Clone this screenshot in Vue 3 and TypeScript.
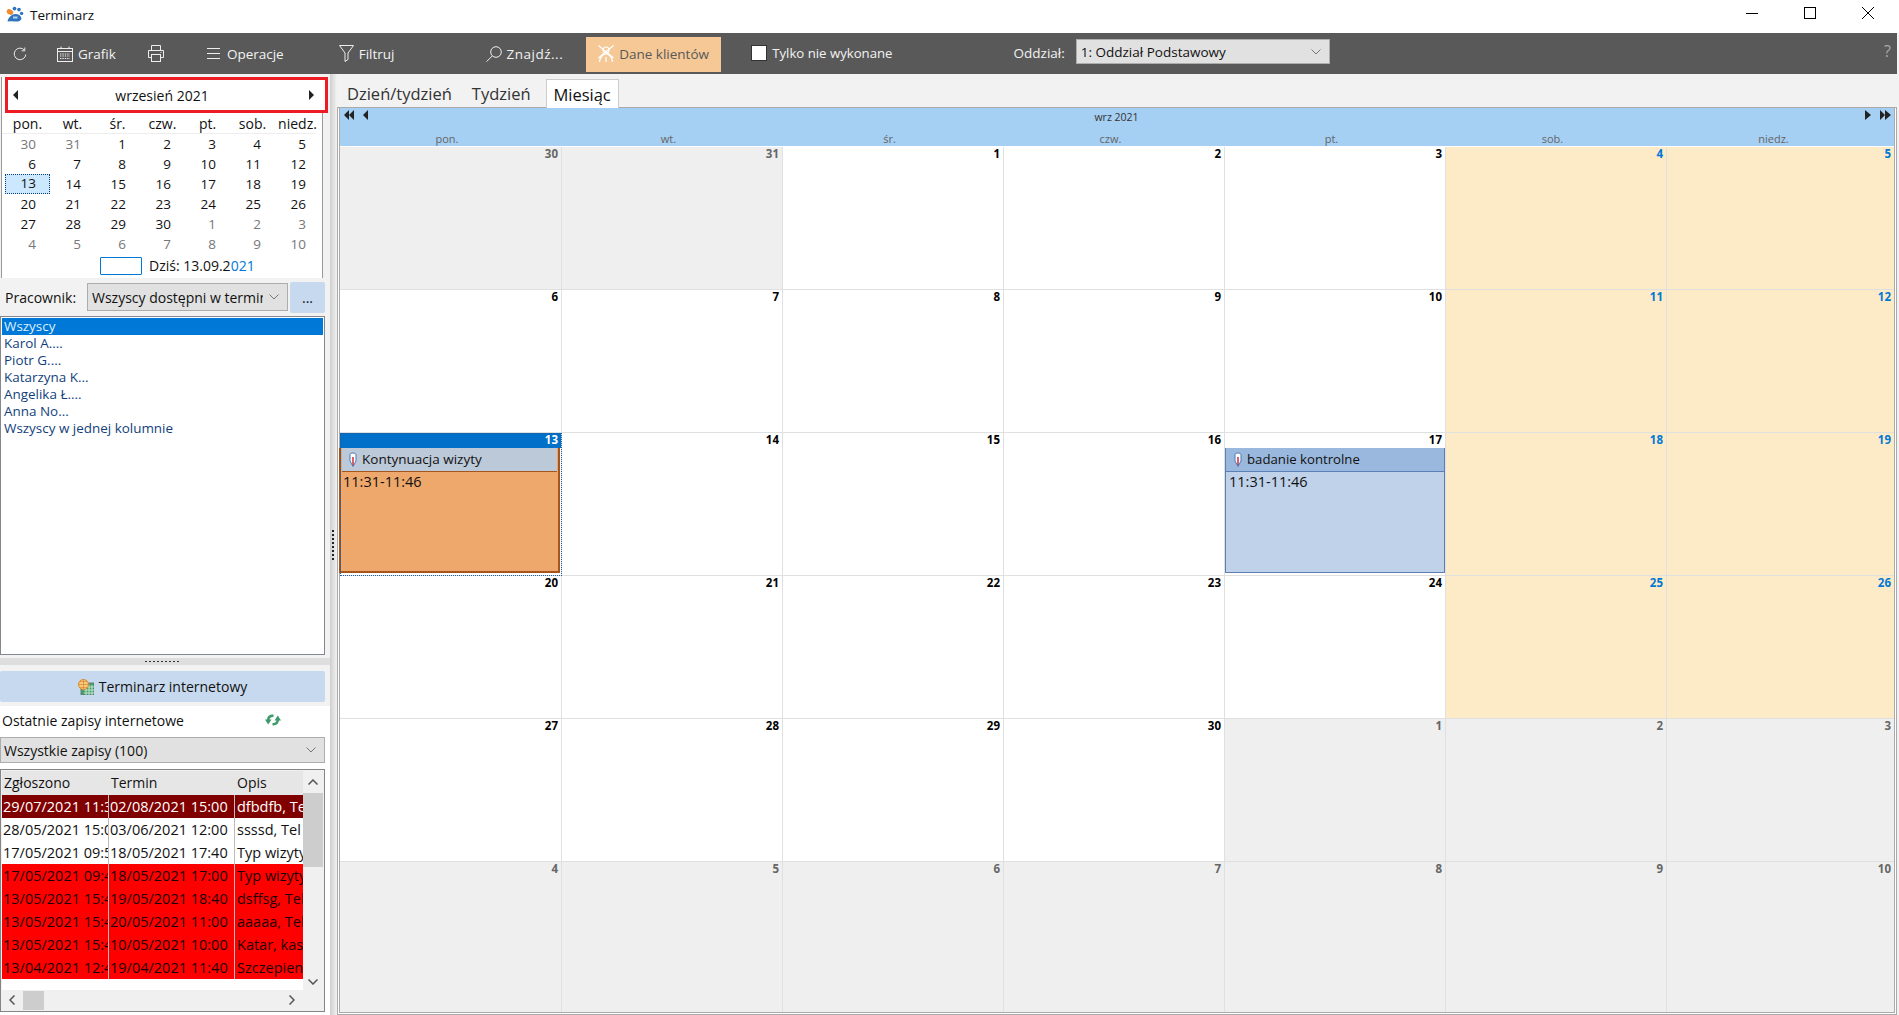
<script setup lang="ts">
interface MiniDay { n: number; muted: boolean; today: boolean }
interface Cell { n: number; kind: 'muted' | 'normal' | 'weekend'; appt: '' | 'sel' | 'blue' }

const weekdays = ['pon.', 'wt.', 'śr.', 'czw.', 'pt.', 'sob.', 'niedz.']
const miniDays: MiniDay[] = []
const cells: Cell[] = []
for (let i = 0; i < 42; i++) {
  const d = i - 1
  const muted = i < 2 || i > 31
  const n = i < 2 ? 30 + i : i > 31 ? i - 31 : d
  miniDays.push({ n, muted, today: i === 14 })
  const col = i % 7
  cells.push({
    n,
    kind: muted ? 'muted' : col > 4 ? 'weekend' : 'normal',
    appt: i === 14 ? 'sel' : i === 18 ? 'blue' : ''
  })
}
const people = ['Wszyscy', 'Karol A....', 'Piotr G....', 'Katarzyna K...', 'Angelika Ł....', 'Anna No...', 'Wszyscy w jednej kolumnie']
const rows = [
  { a: '29/07/2021 11:30', b: '02/08/2021 15:00', c: 'dfbdfb, Tel', t: 'dark' },
  { a: '28/05/2021 15:00', b: '03/06/2021 12:00', c: 'ssssd, Tel', t: 'white' },
  { a: '17/05/2021 09:50', b: '18/05/2021 17:40', c: 'Typ wizyty', t: 'white' },
  { a: '17/05/2021 09:40', b: '18/05/2021 17:00', c: 'Typ wizyty', t: 'red' },
  { a: '13/05/2021 15:40', b: '19/05/2021 18:40', c: 'dsffsg, Tel', t: 'red' },
  { a: '13/05/2021 15:40', b: '20/05/2021 11:00', c: 'aaaaa, Tel', t: 'red' },
  { a: '13/05/2021 15:40', b: '10/05/2021 10:00', c: 'Katar, kasz', t: 'red' },
  { a: '13/04/2021 12:40', b: '19/04/2021 11:40', c: 'Szczepienie', t: 'red' }
]
const dots = Array.from({ length: 8 })
</script>

<template>
  <div class="app">
    <header class="titlebar">
      <svg class="logo" width="18" height="18" viewBox="0 0 18 18">
        <ellipse cx="4" cy="6" rx="3.4" ry="2.6" fill="#f28a2e" transform="rotate(25 4 6)" />
        <circle cx="8.5" cy="2.6" r="1.9" fill="#2f74c0" />
        <circle cx="13" cy="3.6" r="1.8" fill="#2f74c0" />
        <circle cx="15.6" cy="7.4" r="1.7" fill="#2f74c0" />
        <path d="M1.5 15.5 Q3 9 9 8 Q15 8 15.5 13 Q14 16 9 15.5 Q5 15 1.5 15.5Z" fill="#2f74c0" />
        <rect x="7" y="10.5" width="4.5" height="2" fill="#bcd6f0" />
      </svg>
      <span class="title">Terminarz</span>
      <div class="winctl">
        <svg width="12" height="12" viewBox="0 0 12 12"><path d="M0 6.5H12" stroke="#000" /></svg>
        <svg width="12" height="12" viewBox="0 0 12 12"><rect x=".5" y=".5" width="11" height="11" fill="none" stroke="#000" /></svg>
        <svg width="12" height="12" viewBox="0 0 12 12"><path d="M0 0L12 12M12 0L0 12" stroke="#000" /></svg>
      </div>
    </header>

    <nav class="toolbar">
      <svg class="t-refresh" width="14" height="14" viewBox="0 0 14 14" fill="none" stroke="#e8e8e8">
        <path d="M11.5 3.2A5.8 5.8 0 1 0 12.8 7.5" />
        <path d="M11.8 .5V3.8H8.6" />
      </svg>
      <svg class="t-grafik" width="16" height="16" viewBox="0 0 16 16" fill="none" stroke="#eee">
        <rect x=".5" y="2.5" width="15" height="13" />
        <path d="M.5 5.5H15.5M4 .5V3M12 .5V3" />
        <path d="M3 8H13M3 10H13M3 12.5H13" stroke-dasharray="1.4 1" />
      </svg>
      <span class="t-label">Grafik</span>
      <svg class="t-print" width="16" height="17" viewBox="0 0 16 17" fill="none" stroke="#eee">
        <path d="M3.5 5.5V.5H12.500V5.500" />
        <path d="M3.500 12.500H.5V5.500H15.500V12.500H12.500" />
        <rect x="3.500" y="9.500" width="9" height="7" />
        <path d="M12.500 7.500H13.500" />
      </svg>
      <svg class="t-menu" width="13" height="11" viewBox="0 0 13 11" stroke="#eee"><path d="M0 .5H13M0 5.500H13M0 10.500H13" /></svg>
      <span class="t-label t-ml7">Operacje</span>
      <svg class="t-filter" width="15" height="17" viewBox="0 0 15 17" fill="none" stroke="#eee">
        <path d="M.5 .5H14.500L9 8V14.500L6 16.500V8Z" />
      </svg>
      <span class="t-label t-ml5">Filtruj</span>
      <svg class="t-search" width="16" height="16" viewBox="0 0 16 16" fill="none" stroke="#eee">
        <circle cx="10" cy="6" r="5.300" />
        <path d="M6.200 10L.5 15.700" />
      </svg>
      <span class="t-label t-ml5 t-find">Znajdź...</span>
      <div class="t-dane">
        <svg width="18" height="18" viewBox="0 0 18 18" fill="none" stroke="#fff" stroke-width="1.200">
          <circle cx="9" cy="5" r="3" />
          <path d="M1.500 .5L16.500 13M16.500 .5L1.500 13M2.500 17C3 12 6 9 9 9S15 12 15.500 17M9 12V17" />
        </svg>
        <span>Dane klientów</span>
      </div>
      <span class="t-check"></span>
      <span class="t-label t-ml5 t-only">Tylko nie wykonane</span>
      <span class="t-label t-odd">Oddział:</span>
      <div class="combo t-combo">
        <span class="combo-text">1: Oddział Podstawowy</span>
        <svg class="chev" width="10" height="6" viewBox="0 0 10 6" fill="none" stroke="#777"><path d="M.5 .5L5 5L9.500 .5" /></svg>
      </div>
      <span class="t-help">?</span>
    </nav>

    <main class="main">
      <aside class="left">
        <section class="cal">
          <div class="cal-nav">
            <svg width="5" height="10" viewBox="0 0 5 10"><path d="M5 0V10L0 5Z" fill="#222" /></svg>
            <span>wrzesień 2021</span>
            <svg width="5" height="10" viewBox="0 0 5 10"><path d="M0 0V10L5 5Z" fill="#222" /></svg>
          </div>
          <div class="cal-head">
            <span v-for="w in weekdays" :key="w">{{ w }}</span>
          </div>
          <div class="cal-days">
            <span v-for="(d, i) in miniDays" :key="i" class="md" :class="{ muted: d.muted, today: d.today }">{{ d.n }}</span>
          </div>
          <div class="cal-foot">
            <span class="today-box"></span>
            <span class="today-text">Dziś: 13.09.2<span class="blue-part">021</span></span>
          </div>
        </section>

        <div class="worker">
          <span class="worker-label">Pracownik:</span>
          <div class="combo worker-combo">
            <span class="combo-text">Wszyscy dostępni w termin</span>
            <svg class="chev" width="10" height="6" viewBox="0 0 10 6" fill="none" stroke="#777"><path d="M.5 .5L5 5L9.500 .5" /></svg>
          </div>
          <button class="more">...</button>
        </div>

        <ul class="people">
          <li v-for="(p, i) in people" :key="p" :class="{ sel: i === 0 }">{{ p }}</li>
        </ul>

        <div class="hsplit"><i></i></div>

        <button class="inet">
          <svg width="16" height="16" viewBox="0 0 16 16">
            <rect x="3" y="4" width="13" height="12" fill="#4aa36f" stroke="#5a6a70" stroke-width=".8" />
            <path d="M6 8H16M6 11H16M6 14H16M8 6V16M11 6V16M14 6V16" stroke="#d5f0dd" stroke-width=".8" />
            <circle cx="5.500" cy="5.500" r="5" fill="#f6c77d" stroke="#d98a2c" />
            <path d="M.5 5.500H10.500M5.500 .5V10.500M2 2.500H9M2 8.500H9" stroke="#d98a2c" stroke-width=".7" />
          </svg>
          <span>Terminarz internetowy</span>
        </button>

        <div class="lower">
          <div class="last">
            <span>Ostatnie zapisy internetowe</span>
            <svg width="16" height="12" viewBox="0 0 16 12" fill="none">
              <path d="M8.500 1.800Q3.500 1.500 3.200 6" stroke="#3d9a6b" stroke-width="2.600" />
              <path d="M0 5.500H6.500L3.200 10.500Z" fill="#3d9a6b" />
              <path d="M7.500 10.200Q12.500 10.500 12.800 6" stroke="#3d9a6b" stroke-width="2.600" />
              <path d="M16 6.500H9.500L12.800 1.500Z" fill="#3d9a6b" />
            </svg>
          </div>
          <div class="combo all-combo">
            <span class="combo-text">Wszystkie zapisy (100)</span>
            <svg class="chev" width="10" height="6" viewBox="0 0 10 6" fill="none" stroke="#777"><path d="M.5 .5L5 5L9.500 .5" /></svg>
          </div>
          <div class="table-box">
            <div class="table-top">
              <div class="table">
                <div class="tr th"><span>Zgłoszono</span><span>Termin</span><span>Opis</span></div>
                <div v-for="(r, i) in rows" :key="i" class="tr" :class="r.t">
                  <span>{{ r.a }}</span><span>{{ r.b }}</span><span>{{ r.c }}</span>
                </div>
              </div>
              <div class="vscroll">
                <svg width="10" height="6" viewBox="0 0 10 6" fill="none" stroke="#555" stroke-width="1.500"><path d="M.5 5.500L5 1L9.500 5.500" /></svg>
                <i></i>
                <svg width="10" height="6" viewBox="0 0 10 6" fill="none" stroke="#555" stroke-width="1.500"><path d="M.5 .5L5 5L9.500 .5" /></svg>
              </div>
            </div>
            <div class="hscroll">
              <svg width="6" height="10" viewBox="0 0 6 10" fill="none" stroke="#555" stroke-width="1.500"><path d="M5.500 .5L1 5L5.500 9.500" /></svg>
              <i></i>
              <svg width="6" height="10" viewBox="0 0 6 10" fill="none" stroke="#555" stroke-width="1.500"><path d="M.5 .5L5 5L.5 9.500" /></svg>
            </div>
          </div>
        </div>
      </aside>

      <div class="vsplit">
        <div class="vdots"><i v-for="(_, i) in dots" :key="i"></i></div>
      </div>

      <section class="right">
        <div class="tabs">
          <span class="tab t1">Dzień/tydzień</span>
          <span class="tab t2">Tydzień</span>
          <span class="tab active">Miesiąc</span>
        </div>
        <div class="frame">
          <div class="inner">
            <div class="hdr">
              <div class="hdr-top">
                <svg width="24" height="10" viewBox="0 0 24 10" fill="#222">
                  <path d="M5 0V10L0 5ZM10 0V10L5 5ZM24 0V10L19 5Z" />
                </svg>
                <span>wrz 2021</span>
                <svg width="26" height="10" viewBox="0 0 26 10" fill="#222">
                  <path d="M0 0V10L6 5ZM15 0V10L20 5ZM20 0V10L26 5Z" />
                </svg>
              </div>
              <div class="hdr-days">
                <span v-for="w in weekdays" :key="w">{{ w }}</span>
              </div>
            </div>
            <div class="grid">
              <div v-for="(c, i) in cells" :key="i" class="cell" :class="[c.kind, c.appt]">
                <div class="num">{{ c.n }}</div>
                <div v-if="c.appt" class="appt" :class="c.appt">
                  <div class="appt-head">
                    <svg width="8" height="15" viewBox="0 0 8 15">
                      <path d="M1 2.500C1 .5 7 .5 7 2.500V9L4 14.500L1 9Z" fill="#fff" stroke="#4a78b8" />
                      <path d="M4 5V13" stroke="#c8202a" stroke-width="1.400" />
                    </svg>
                    <span>{{ c.appt === 'sel' ? 'Kontynuacja wizyty' : 'badanie kontrolne' }}</span>
                  </div>
                  <div class="appt-time">11:31-11:46</div>
                </div>
              </div>
            </div>
          </div>
        </div>
      </section>
    </main>
  </div>
</template>

<style>
html, body { margin: 0; padding: 0; background: #fff; overflow: hidden; }
</style>

<style scoped>
.app {
  width: 1899px; height: 1015px; display: flex; flex-direction: column; overflow: hidden;
  background: #f2f2f2; color: #111; font: 14px "Open Sans", "Noto Sans", sans-serif;
}
.titlebar { height: 33px; flex: none; background: #fff; display: flex; align-items: center; box-sizing: border-box; padding-bottom: 3px; }
.logo { margin-left: 6px; }
.title { margin-left: 6px; font-size: 13.500px; color: #111; }
.winctl { margin-left: auto; display: flex; gap: 46px; margin-right: 25px; margin-top: -4px; }

.toolbar {
  height: 41px; flex: none; background: #595959; display: flex; align-items: center;
  color: #f2f2f2; margin-right: 2px; font-size: 13.500px;
}
.t-label { white-space: nowrap; }
.t-refresh { margin-left: 13px; }
.t-grafik { margin-left: 30px; margin-right: 5px; }
.t-print { margin-left: 32px; }
.t-menu { margin-left: 43px; }
.t-ml7 { margin-left: 7px; }
.t-ml5 { margin-left: 5px; }
.t-filter { margin-left: 55px; }
.t-search { margin-left: 91px; }
.t-find { letter-spacing: .5px; }
.t-dane {
  margin-left: 23px; width: 135px; height: 35px; margin-top: 1px; background: #f5c896; color: #595959;
  display: flex; align-items: center; box-sizing: border-box; padding-left: 11px; gap: 4px; white-space: nowrap;
}
.t-check { margin-left: 30px; width: 14px; height: 14px; background: #fff; border: 1px solid #333; margin-top: -2px; }
.t-only { margin-top: -2px; font-size: 13.200px; }
.t-odd { margin-left: 121px; margin-top: -2px; }
.combo {
  display: flex; align-items: center; background: #e1e1e1; border: 1px solid #adadad; box-sizing: border-box;
  padding: 0 8px 0 4px; color: #111;
}
.combo-text { flex: 1; overflow: hidden; white-space: nowrap; }
.t-combo { margin-left: 11px; width: 254px; height: 25px; margin-top: -4px; }
.t-help { margin-left: auto; margin-right: 6px; color: #a8a8a8; font-size: 16px; margin-top: -6px; }

.main { flex: 1; display: flex; min-height: 0; }
.left { width: 330px; flex: none; display: flex; flex-direction: column; }

.cal {
  margin: 3px 0 0 1px; width: 322px; height: 201px; box-sizing: border-box; flex: none;
  border-left: 1px solid #999; border-right: 1px solid #999; background: #fff; display: flex; flex-direction: column;
}
.cal-nav {
  margin-left: 3px; width: 323px; height: 36px; box-sizing: border-box; flex: none;
  border: 3px solid #ed1c24; display: flex; align-items: center; justify-content: space-between;
  padding: 0 11px 0 5px; background: #fff;
}
.cal-nav span { font-size: 14px; margin-top: 1px; margin-right: 3px; }
.cal-head, .cal-days { display: grid; grid-template-columns: repeat(7, 45px); padding-left: 3px; }
.cal-head { height: 20px; align-items: center; text-align: center; flex: none; position: relative; border-bottom: 1px solid #eee; margin-right: 7px; }
.md { height: 20px; line-height: 20px; text-align: right; padding-right: 14px; box-sizing: border-box; font-size: 13.500px; }
.md.muted { color: #777; }
.md.today { background: #cce8ff; outline: 1px dotted #0a3f78; outline-offset: -1px; line-height: 19px; }
.cal-foot { display: flex; align-items: center; height: 24px; padding-left: 98px; gap: 7px; }
.today-box { width: 42px; height: 18px; box-sizing: border-box; border: 1px solid #0078d7; background: #fff; border-radius: 1px; }
.today-text { margin-top: -2px; }
.blue-part { color: #0078d7; }

.worker { height: 38px; flex: none; display: flex; align-items: center; padding-left: 5px; box-sizing: border-box; }
.worker-label { width: 82px; flex: none; }
.worker-combo { width: 201px; height: 28px; flex: none; }
.worker-combo .combo-text { margin-right: 6px; }
.more {
  width: 35px; height: 31px; margin-left: 2px; flex: none; border: 0; background: #c7d9ee; border-radius: 2px;
  padding: 0; font: inherit; color: #111;
}
.people {
  margin: 0; padding: 1px; list-style: none; width: 325px; height: 339px; flex: none; box-sizing: border-box;
  border: 1px solid #828790; background: #fff; color: #123f7c; font-size: 13.450px;
}
.people li { height: 17px; line-height: 17px; padding-left: 2px; white-space: nowrap; }
.people li.sel { background: #0078d7; color: #dfeeff; }

.hsplit { height: 16px; flex: none; display: flex; align-items: center; margin-top: -1px; }
.hsplit i {
  display: block; width: 100%; height: 7px; margin-top: -2px;
  background: repeating-linear-gradient(90deg, #333 0 2px, transparent 2px 4px) 145px 3px / 36px 1px no-repeat, #dedede;
}
.inet {
  width: 325px; height: 31px; flex: none; border: 0; background: #c7d9ee; border-radius: 2px; padding: 0;
  display: flex; align-items: center; justify-content: center; gap: 5px; font: inherit; color: #111; margin-top: 1px;
}
.lower { flex: 1; background: #fff; margin-top: 4px; display: flex; flex-direction: column; }
.last { height: 31px; flex: none; display: flex; align-items: center; padding: 0 0 3px 2px; box-sizing: border-box; gap: 81px; }
.all-combo { width: 325px; height: 26px; flex: none; padding-left: 3px; }
.table-box {
  width: 325px; height: 243px; margin-top: 6px; box-sizing: border-box; flex: none; border: 1px solid #858585; background: #f0f0f0;
  padding: 1px; display: flex; flex-direction: column;
}
.table-top { flex: 1; display: flex; min-height: 0; }
.table { width: 301px; flex: none; background: #fff; overflow: hidden; }
.tr { display: grid; grid-template-columns: 107px 126px 68px; height: 23px; line-height: 23px; font-size: 14.500px; white-space: nowrap; overflow: hidden; }
.tr span { overflow: hidden; padding-left: 1px; box-sizing: border-box; border-right: 1px solid #bdbdbd; }
.tr span:last-child { border-right: 0; padding-left: 2px; }
.tr.th { height: 24px; background: #e6e6e6; font-size: 14px; }
.tr.th span { border-right: 0; padding-left: 2px; }
.tr.dark { background: #800000; color: #fff; }
.tr.red { background: #ff0000; color: #1a0000; }
.vscroll {
  width: 20px; flex: none; display: flex; flex-direction: column; align-items: center; padding: 8px 0 5px; box-sizing: border-box; background: #f0f0f0;
}
.vscroll i { display: block; width: 100%; height: 74px; background: #cdcdcd; margin: 8px 0 auto; }
.hscroll { height: 20px; flex: none; display: flex; align-items: center; padding: 0 28px 0 7px; background: #f0f0f0; }
.hscroll i { display: block; width: 21px; height: 19px; background: #cdcdcd; margin: 0 auto 0 8px; }

.vsplit { width: 7px; flex: none; display: flex; align-items: center; background: linear-gradient(90deg, #cfcfcf, #f2f2f2); }
.vdots { display: flex; flex-direction: column; gap: 2px; margin-left: 2px; }
.vdots i { display: block; width: 2px; height: 2px; background: #222; }

.right { flex: 1; display: flex; flex-direction: column; min-width: 0; }
.tabs { height: 33px; flex: none; display: flex; padding-top: 5px; box-sizing: border-box; }
.tab { font-size: 16.500px; line-height: 30px; white-space: nowrap; color: #333; }
.t1 { margin-left: 10px; }
.t2 { margin-left: 20px; }
.tab.active {
  margin-left: 15px; width: 73px; height: 29px; box-sizing: border-box; text-align: center; background: #fff;
  border: 1px solid #ccc; border-bottom: 0; color: #111; position: relative; z-index: 1;
}
.frame {
  flex: 1; margin-right: 2px; border: 1px solid #aaa; padding: 0 1px 1px; box-sizing: border-box; background: #fff; min-height: 0; display: flex;
}
.inner { flex: 1; border: 1px solid #aaa; border-top: 0; display: flex; flex-direction: column; min-width: 0; }
.hdr { height: 39px; flex: none; background: #a5cff3; border-bottom: 1px solid #fff; box-sizing: border-box; display: flex; flex-direction: column; }
.hdr-top { height: 17px; padding: 2px 3px 0 4px; box-sizing: border-box; display: flex; align-items: flex-start; justify-content: space-between; font-size: 10.500px; color: #333; }
.hdr-top span { line-height: 14px; }
.hdr-days { display: grid; grid-template-columns: 222px repeat(5, 221px) 1fr; margin-top: 7px; text-align: center; font-size: 11px; color: #666; line-height: 13px; }
.hdr-days span { padding-right: 8px; }
.hdr-days span:last-child { padding-right: 14px; }
.grid {
  flex: 1; display: grid; min-height: 0;
  grid-template-columns: 222px repeat(5, 221px) 1fr;
  grid-template-rows: repeat(5, 143px) 1fr;
}
.cell { box-sizing: border-box; border-right: 1px solid #e0e0e0; border-bottom: 1px solid #e0e0e0; min-width: 0; display: flex; flex-direction: column; }
.cell:nth-child(7n) { border-right: 0; }
.cell:nth-last-child(-n+7) { border-bottom: 0; }
.cell.normal { background: #fff; }
.cell.muted { background: #efefef; }
.cell.weekend { background: #fdebc8; }
.num { height: 15px; text-align: right; padding-right: 3px; font: bold 11.500px/14px "Open Sans", sans-serif; color: #000; flex: none; }
.muted .num { color: #666; }
.weekend .num { color: #0078d7; }
.cell.sel { outline: 1px dotted #1f5f9f; outline-offset: -1px; position: relative; }
.cell.sel .num { background: #0070c8; color: #fff; }
.appt { height: 125px; flex: none; box-sizing: border-box; font-size: 13.200px; color: #111; }
.appt.sel { background: #eea86b; border: 2px solid #a5561c; border-top: 0; margin: 0 1px 0 -1px; font-size: 13.500px; }
.appt.blue { background: #bfd2ea; border: 1px solid #5b7fb3; border-top: 0; }
.appt-head { height: 24px; display: flex; align-items: center; box-sizing: border-box; gap: 5px; }
.appt-head span { margin-top: -2px; }
.appt.sel .appt-head { background: #bcc9d8; border-bottom: 1px solid #a5561c; padding-left: 7px; margin: 0 1px; }
.appt.blue .appt-head { background: #9ab8dd; border-bottom: 1px solid #5b80b5; padding-left: 8px; }
.appt-time { padding: 1px 0 0 2px; line-height: 18px; font-size: 14.500px; }
.appt.blue .appt-time { padding-left: 3px; }
</style>
